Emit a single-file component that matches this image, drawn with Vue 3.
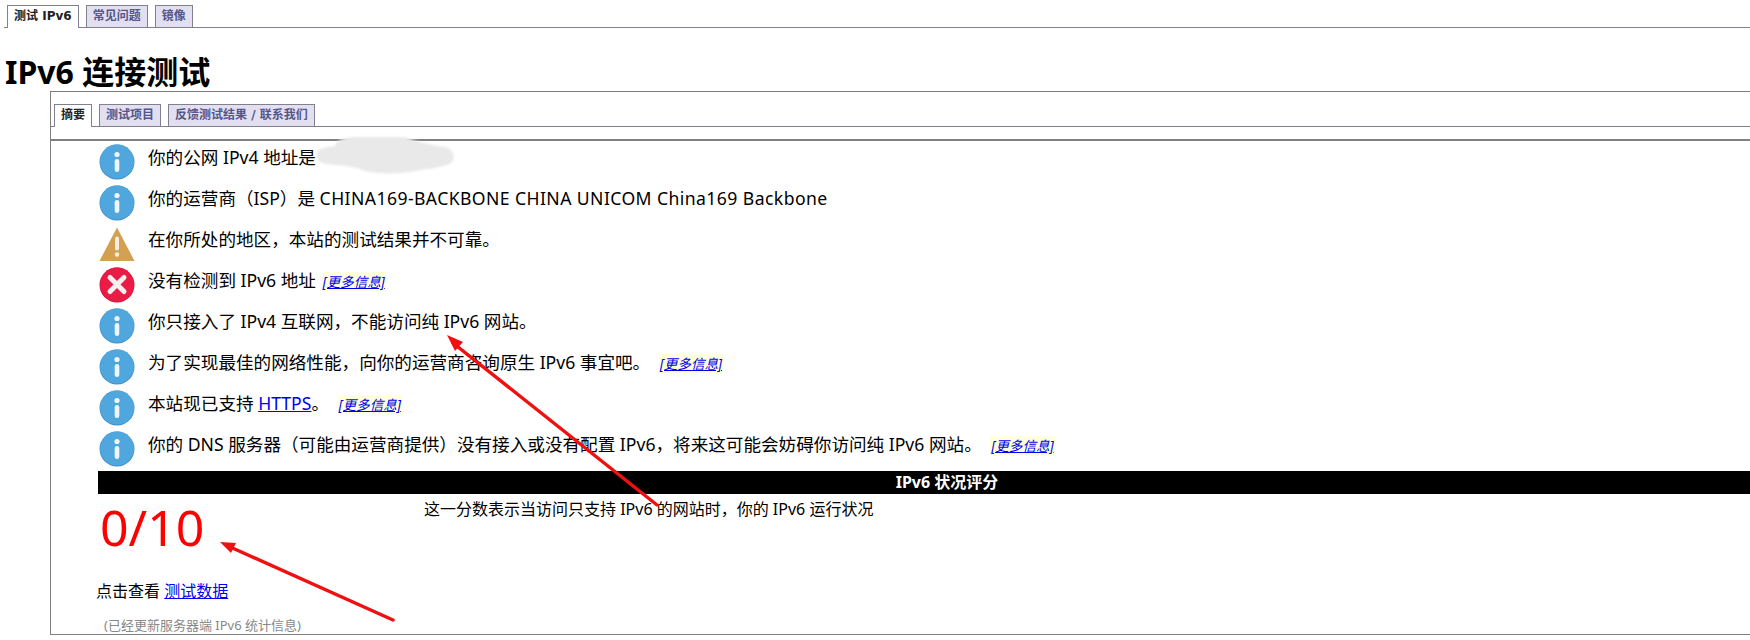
<script setup>
const outerTabs = [
  { label: "测试 IPv6", active: true },
  { label: "常见问题" },
  { label: "镜像" },
];

const innerTabs = [
  { label: "摘要", active: true },
  { label: "测试项目" },
  { label: "反馈测试结果 / 联系我们" },
];

const rows = [
  { icon: "info", text: "你的公网 IPv4 地址是" },
  { icon: "info", text: "你的运营商（ISP）是 ", isp: "CHINA169-BACKBONE CHINA UNICOM China169 Backbone" },
  { icon: "warn", text: "在你所处的地区，本站的测试结果并不可靠。" },
  { icon: "error", text: "没有检测到 IPv6 地址", more: true },
  { icon: "info", text: "你只接入了 IPv4 互联网，不能访问纯 IPv6 网站。" },
  { icon: "info", text: "为了实现最佳的网络性能，向你的运营商咨询原生 IPv6 事宜吧。", more: true, wide: true },
  { icon: "info", text: "本站现已支持 ", link: "HTTPS", after: "。", more: true, wide: true },
  { icon: "info", text: "你的 DNS 服务器（可能由运营商提供）没有接入或没有配置 IPv6，将来这可能会妨碍你访问纯 IPv6 网站。", more: true, wide: true },
];
</script>

<template>
  <div class="page">
    <nav class="tabs tabs--outer">
      <a v-for="tab in outerTabs" :key="tab.label" class="tab" :class="{ 'tab--active': tab.active }">{{ tab.label }}</a>
    </nav>

    <h1 class="title">IPv6 连接测试</h1>

    <section class="panel">
      <nav class="tabs tabs--inner">
        <a v-for="tab in innerTabs" :key="tab.label" class="tab" :class="{ 'tab--active': tab.active }">{{ tab.label }}</a>
      </nav>
      <div class="rule"></div>

      <ul class="rows">
        <li v-for="row in rows" :key="row.text" class="row">
          <svg class="icon" viewBox="0 0 36 36" aria-hidden="true">
            <template v-if="row.icon === 'info'">
              <circle cx="18" cy="18" r="17.5" fill="#3f8fc4" />
              <circle cx="18" cy="17.5" r="17" fill="#50a7de" />
              <circle cx="18" cy="10.5" r="2.6" fill="#eef6fb" />
              <rect x="15.7" y="15" width="4.6" height="13" rx="2.3" fill="#eef6fb" />
            </template>
            <template v-else-if="row.icon === 'warn'">
              <path d="M18 1.5 L35.5 35 H0.5 Z" fill="#d3a052" />
              <rect x="16" y="10.5" width="4" height="14" rx="2" fill="#f6eee0" />
              <circle cx="18" cy="28.5" r="2.2" fill="#f6eee0" />
            </template>
            <template v-else>
              <circle cx="18" cy="18" r="17.5" fill="#c81a3a" />
              <circle cx="18" cy="17.5" r="17" fill="#ea1c45" />
              <path d="M11 10.5 L25 24.5 M25 10.5 L11 24.5" stroke="#f7eef0" stroke-width="5" stroke-linecap="round" />
            </template>
          </svg>
          <p class="row-text">
            {{ row.text }}<span v-if="row.isp" class="isp">{{ row.isp }}</span><a v-if="row.link" class="link">{{ row.link }}</a>{{ row.after }}
            <a v-if="row.more" class="more" :class="{ 'more--wide': row.wide }">[更多信息]</a>
          </p>
        </li>
      </ul>

      <h2 class="score-bar">IPv6 状况评分</h2>
      <div class="score-row">
        <div class="score">0/10</div>
        <p class="score-note">这一分数表示当访问只支持 IPv6 的网站时，你的 IPv6 运行状况</p>
      </div>

      <p class="data-line">点击查看 <a class="link">测试数据</a></p>
      <p class="server-note">(已经更新服务器端 IPv6 统计信息)</p>
    </section>

    <!-- smudge hiding the address -->
    <svg class="smudge" viewBox="0 0 1750 640" aria-hidden="true">
      <path
        d="M317 153 C318 148 328 147 335 146 C337 139 345 137 360 137 L405 137 C415 141 430 145 445 147 C455 149 456 160 450 164 C440 168 425 169 410 172 C395 174 375 174 365 171 C355 167 345 165 325 164 C318 162 316 158 317 153 Z"
        fill="#e9e9e9"
      />
    </svg>

    <!-- hand drawn annotation arrows -->
    <svg class="arrows" viewBox="0 0 1750 640" aria-hidden="true">
      <path d="M657 505 L453 343" stroke="#f01010" stroke-width="3.4" fill="none" stroke-linecap="round" />
      <path d="M447 335 L463 342 L455 351 Z" fill="#f01010" />
      <path d="M393 620 L228 546" stroke="#f01010" stroke-width="3.4" fill="none" stroke-linecap="round" />
      <path d="M220 542 L236 543 L231 553 Z" fill="#f01010" />
    </svg>
  </div>
</template>

<style scoped>
.page {
  position: relative;
  width: 1750px;
  height: 640px;
  overflow: hidden;
  background: #fff;
  color: #000;
  font-family: "Noto Sans", "Noto Sans CJK SC", sans-serif;
}

.tabs {
  display: flex;
  gap: 7px;
  height: 22px;
  border-bottom: 1px solid #808090;
}

.tabs--outer {
  margin: 5px 0 0 4px;
  padding-left: 3px;
}

.tabs--inner {
  margin-top: 12px;
  padding-left: 3px;
}

.tab {
  display: block;
  box-sizing: border-box;
  height: 22px;
  padding: 0 6px;
  border: 1px solid #808090;
  border-bottom: 0;
  background: #e2e0f0;
  color: #55558a;
  font: bold 12px/20px "DejaVu Sans", "Noto Sans CJK SC", sans-serif;
  white-space: nowrap;
}

.tab--active {
  height: 23px;
  background: #fff;
  color: #222;
}

.title {
  margin: 0;
  height: 63px;
  padding: 22px 0 0 5px;
  box-sizing: border-box;
  font-size: 32px;
  line-height: 44px;
  font-weight: 700;
}

.panel {
  width: 1746px;
  height: 544px;
  margin-left: 50px;
  box-sizing: border-box;
  border: 1px solid #808080;
  border-right: 0;
}

.rule {
  height: 2px;
  margin-top: 12px;
  background: #808080;
}

.rows {
  margin: 3px 0 0;
  padding: 0 0 0 48px;
  list-style: none;
}

.row {
  display: flex;
  gap: 13px;
  height: 41px;
}

.icon {
  flex: none;
  width: 36px;
  height: 36px;
}

.row-text {
  margin: 0;
  font-size: 17.6px;
  line-height: 26px;
  white-space: nowrap;
}

.isp {
  letter-spacing: 0.42px;
}

.link {
  color: #0000ee;
  text-decoration: underline;
}

.more {
  margin-left: 1px;
  padding: 0 1px;
  background: #ffffdd;
  color: #0000ee;
  font-size: 13.6px;
  font-style: italic;
  text-decoration: underline;
}

.more--wide {
  margin-left: 4px;
}

.score-bar {
  margin: -1px 0 0 47px;
  height: 23px;
  background: #000;
  color: #fff;
  font-size: 16px;
  line-height: 23px;
  font-weight: 700;
  text-align: center;
}

.score-row {
  display: flex;
  height: 77px;
  margin-left: 49px;
}

.score {
  width: 324px;
  margin-top: -3px;
  color: #ff0000;
  font-size: 50px;
  line-height: 72px;
}

.score-note {
  margin: 5px 0 0;
  font-size: 16px;
  line-height: 20px;
  white-space: nowrap;
}

.data-line {
  margin: 8px 0 0 45px;
  font-size: 16px;
  line-height: 24px;
}

.server-note {
  margin: 12px 0 0 53px;
  color: #888;
  font-size: 13px;
  line-height: 20px;
}

.smudge {
  position: absolute;
  inset: 0;
  width: 1750px;
  height: 640px;
  filter: blur(1px);
  pointer-events: none;
}

.arrows {
  position: absolute;
  inset: 0;
  width: 1750px;
  height: 640px;
  pointer-events: none;
}
</style>

<style>
html,
body {
  margin: 0;
  background: #fff;
  overflow: hidden;
}
</style>
